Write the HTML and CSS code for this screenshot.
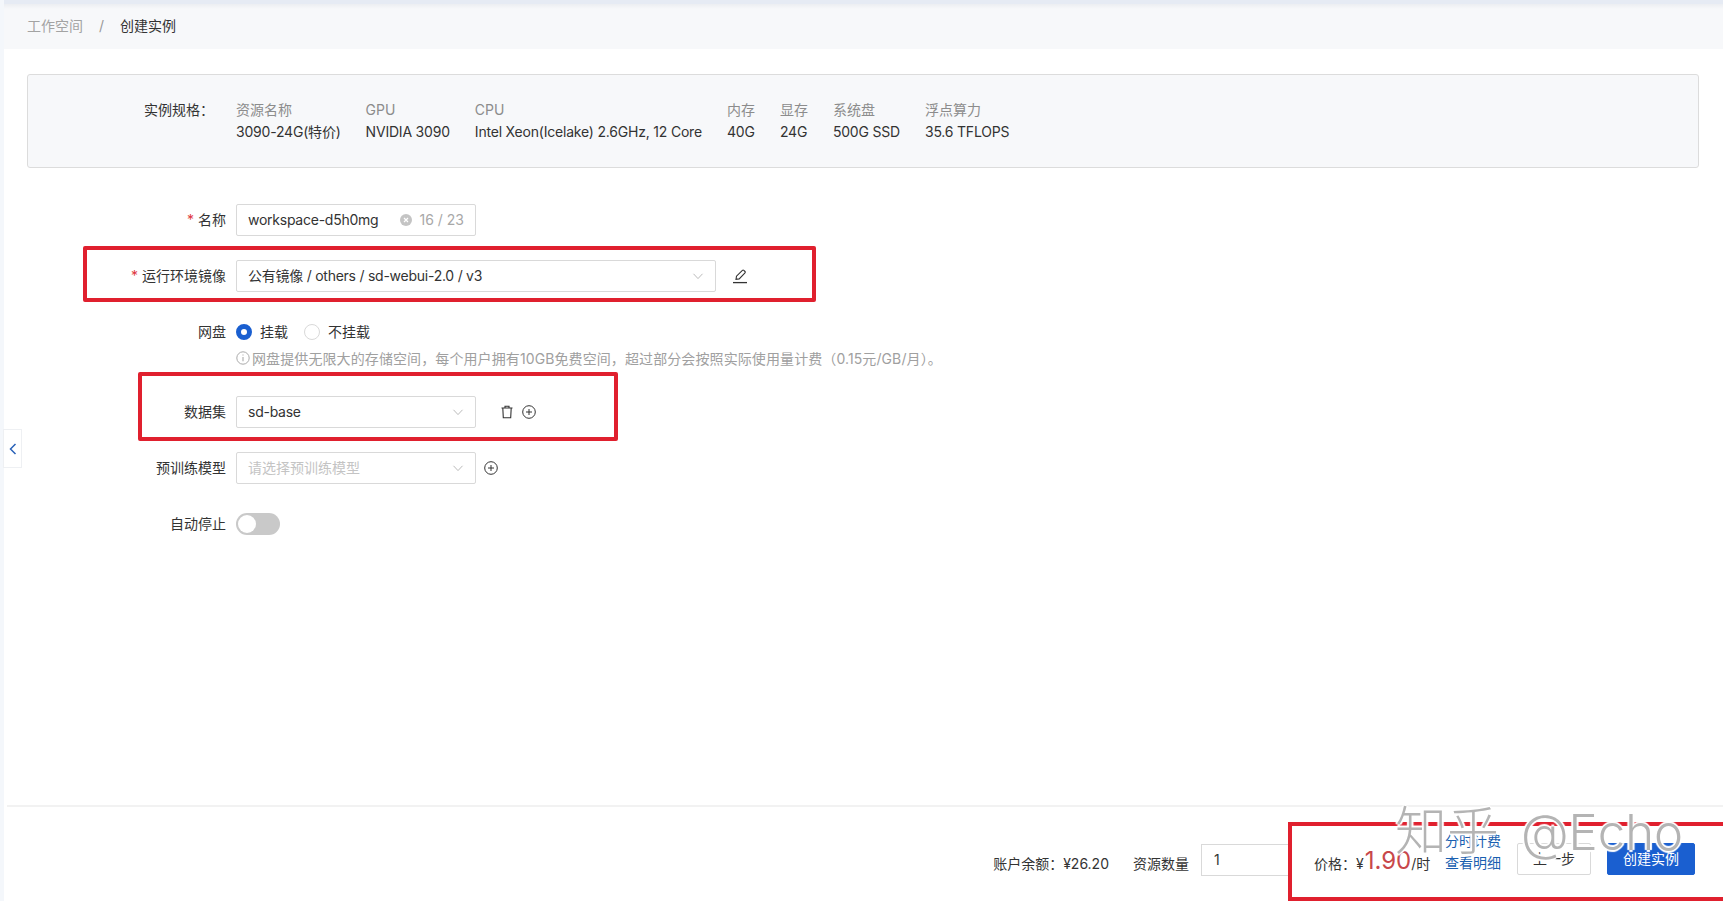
FILE: index.html
```html
<!DOCTYPE html>
<html>
<head>
    <meta charset="UTF-8">
    <title>创建实例</title>
    <link rel="stylesheet" href="styles.css">
</head>
<body>

    <div class="page">
        <div class="topbar"></div>

        <div class="breadcrumb">
            <span class="crumb-link">工作空间</span>
            <span class="crumb-sep">/</span>
            <span class="crumb-current">创建实例</span>
        </div>

        <div class="main">
            <div class="spec">
                <div class="spec-title">实例规格：</div>
                <div class="spec-col"><span class="spec-key">资源名称</span><span class="spec-val">3090-24G(特价)</span></div>
                <div class="spec-col"><span class="spec-key">GPU</span><span class="spec-val">NVIDIA 3090</span></div>
                <div class="spec-col"><span class="spec-key">CPU</span><span class="spec-val">Intel Xeon(Icelake) 2.6GHz, 12 Core</span></div>
                <div class="spec-col"><span class="spec-key">内存</span><span class="spec-val">40G</span></div>
                <div class="spec-col"><span class="spec-key">显存</span><span class="spec-val">24G</span></div>
                <div class="spec-col"><span class="spec-key">系统盘</span><span class="spec-val">500G SSD</span></div>
                <div class="spec-col"><span class="spec-key">浮点算力</span><span class="spec-val">35.6 TFLOPS</span></div>
            </div>

            <div class="form">
                <div class="row">
                    <label class="label"><span class="req">*</span> 名称</label>
                    <div class="field w240">
                        <span class="field-text">workspace-d5h0mg</span>
                        <svg class="clear" width="12" height="12" viewBox="0 0 12 12"><circle cx="6" cy="6" r="6" fill="#c4c4c4"/><path d="M4 4l4 4M8 4l-4 4" stroke="#fff" stroke-width="1.2"/></svg>
                        <span class="count">16 / 23</span>
                    </div>
                </div>

                <div class="row">
                    <div class="mark mark-image"></div>
                    <label class="label"><span class="req">*</span> 运行环境镜像</label>
                    <div class="field w480">
                        <span class="field-text">公有镜像 / others / sd-webui-2.0 / v3</span>
                        <svg class="arrow" width="12" height="12" viewBox="0 0 12 12"><path d="M1.5 3.8L6 8.6l4.5-4.8" fill="none" stroke="#bbb" stroke-width="1"/></svg>
                    </div>
                    <svg class="icon edit" width="16" height="16" viewBox="0 0 16 16"><path d="M4 11.4l.5-3.2L10.4 2.3a1 1 0 0 1 1.4 0l1.2 1.2a1 1 0 0 1 0 1.4L7.2 10.9z" fill="none" stroke="#333" stroke-width="1.1"/><path d="M1 14.6h14" stroke="#333" stroke-width="1.3"/></svg>
                </div>

                <div class="row row-tight">
                    <label class="label">网盘</label>
                    <span class="radio radio-on"></span>
                    <span class="radio-text">挂载</span>
                    <span class="radio"></span>
                    <span class="radio-text">不挂载</span>
                </div>
                <div class="hint">
                    <svg width="14" height="14" viewBox="0 0 14 14"><circle cx="7" cy="7" r="6.2" fill="none" stroke="#aaa"/><path d="M7 6v4.2M7 3.4v1.2" stroke="#aaa" stroke-width="1.1"/></svg>
                    <span>网盘提供无限大的存储空间，每个用户拥有10GB免费空间，超过部分会按照实际使用量计费（0.15元/GB/月）。</span>
                </div>

                <div class="row">
                    <div class="mark mark-data"></div>
                    <label class="label">数据集</label>
                    <div class="field w240">
                        <span class="field-text">sd-base</span>
                        <svg class="arrow" width="12" height="12" viewBox="0 0 12 12"><path d="M1.5 3.8L6 8.6l4.5-4.8" fill="none" stroke="#bbb" stroke-width="1"/></svg>
                    </div>
                    <svg class="icon trash" width="14" height="14" viewBox="0 0 14 14"><path d="M1.5 3h11M5 3V1.2h4V3M2.8 3l.5 9.8h7.4l.5-9.8" fill="none" stroke="#333" stroke-width="1.1"/></svg>
                    <svg class="icon plus-next" width="14" height="14" viewBox="0 0 14 14"><circle cx="7" cy="7" r="6.3" fill="none" stroke="#333"/><path d="M7 4v6M4 7h6" stroke="#333"/></svg>
                </div>

                <div class="row">
                    <label class="label">预训练模型</label>
                    <div class="field w240">
                        <span class="field-text placeholder">请选择预训练模型</span>
                        <svg class="arrow" width="12" height="12" viewBox="0 0 12 12"><path d="M1.5 3.8L6 8.6l4.5-4.8" fill="none" stroke="#bbb" stroke-width="1"/></svg>
                    </div>
                    <svg class="icon plus" width="14" height="14" viewBox="0 0 14 14"><circle cx="7" cy="7" r="6.3" fill="none" stroke="#333"/><path d="M7 4v6M4 7h6" stroke="#333"/></svg>
                </div>

                <div class="row">
                    <label class="label">自动停止</label>
                    <span class="switch"><span class="knob"></span></span>
                </div>
            </div>
        </div>

        <div class="footer">
            <span class="balance">账户余额：¥26.20</span>
            <span class="qty-label">资源数量</span>
            <div class="qty">1</div>
            <div class="checkout">
                <div class="price">价格：¥<span class="amount">1.90</span>/时</div>
                <div class="links">
                    <a>分时计费</a>
                    <a>查看明细</a>
                </div>
                <button class="btn">上一步</button>
                <button class="btn btn-primary">创建实例</button>
            </div>
        </div>
    </div>

    <div class="collapse">
        <svg width="8" height="12" viewBox="0 0 8 12"><path d="M6.5 1L1.5 6l5 5" fill="none" stroke="#2a62b8" stroke-width="1.5"/></svg>
    </div>
    <div class="watermark">知乎<span class="watermark-name">@Echo</span></div>

</body>
</html>
```

FILE: styles.css
```css
* {
    box-sizing: border-box;
}

body {
    margin: 0;
    font-family: Inter, "Noto Sans CJK SC", sans-serif;
    font-size: 14px;
    color: #333;
    background: #fff;
}

.page {
    height: 901px;
    display: flex;
    flex-direction: column;
    border-left: 4px solid #f4f7fb;
    overflow: hidden;
}

.topbar {
    height: 4px;
    margin-left: -4px;
    background: #e6ebf4;
}

.breadcrumb {
    height: 45px;
    padding: 0 0 3px 23px;
    display: flex;
    align-items: center;
    background: linear-gradient(#eceef2, #f7f8fa 5px);
}

.crumb-link {
    color: #a3a3a3;
}

.crumb-sep {
    margin: 0 16px;
    color: #999;
}

.main {
    flex: 1;
    padding: 25px 24px 0 23px;
}

/* instance spec */
.spec {
    height: 94px;
    padding-top: 24px;
    display: flex;
    gap: 25px;
    background: #f7f8fa;
    border: 1px solid #dcdcdc;
    border-radius: 3px;
}

.spec-title {
    width: 186px;
    margin-right: -3px;
    text-align: right;
    line-height: 22px;
}

.spec-col {
    display: flex;
    flex-direction: column;
    line-height: 22px;
}

.spec-key {
    color: #8c8c8c;
}

.spec-val {
    letter-spacing: -0.2px;
}

/* form */
.form {
    margin-top: 36px;
}

.row {
    height: 32px;
    margin-bottom: 24px;
    display: flex;
    align-items: center;
    position: relative;
}

.row-tight {
    margin-bottom: 0;
}

.label {
    width: 199px;
    margin-right: 10px;
    padding-bottom: 2px;
    text-align: right;
}

.req {
    color: #e0383e;
}

.field {
    height: 32px;
    padding: 0 11px;
    display: flex;
    align-items: center;
    border: 1px solid #d9d9d9;
    border-radius: 2px;
    background: #fff;
}

.w240 {
    width: 240px;
}

.w480 {
    width: 480px;
}

.field-text {
    flex: 1;
    padding-bottom: 2px;
    white-space: nowrap;
    letter-spacing: -0.25px;
}

.placeholder {
    color: #c4c4c4;
    letter-spacing: 0;
}

.clear {
    margin-right: 8px;
}

.count {
    padding-bottom: 2px;
    color: #a8a8a8;
}

.edit {
    margin-left: 16px;
}

.trash {
    margin-left: 24px;
}

.plus-next {
    margin-left: 8px;
}

.plus {
    margin-left: 8px;
}

.radio {
    width: 16px;
    height: 16px;
    border: 1px solid #d9d9d9;
    border-radius: 50%;
    background: #fff;
}

.radio-on {
    border: 5px solid #1a5fd0;
}

.radio-text {
    margin: 0 16px 0 8px;
    padding-bottom: 2px;
}

.hint {
    height: 22px;
    margin: 0 0 26px 209px;
    padding-bottom: 2px;
    display: flex;
    align-items: center;
    gap: 2px;
    color: #a0a0a0;
    white-space: nowrap;
    letter-spacing: 0.1px;
}

.switch {
    width: 44px;
    height: 22px;
    padding: 2px;
    border-radius: 11px;
    background: #c9c9c9;
}

.knob {
    display: block;
    width: 18px;
    height: 18px;
    border-radius: 50%;
    background: #fff;
}

/* red annotation frames */
.mark {
    position: absolute;
    border: 4px solid #e0202e;
    border-radius: 2px;
    pointer-events: none;
}

.mark-image {
    left: 56px;
    top: -14px;
    width: 733px;
    height: 56px;
}

.mark-data {
    left: 111px;
    top: -24px;
    width: 480px;
    height: 69px;
}

/* footer */
.footer {
    height: 96px;
    display: flex;
    justify-content: flex-end;
    align-items: flex-start;
    border-top: 2px solid #f2f2f2;
    margin-left: 3px;
}

.balance {
    margin: 46px 24px 0 0;
}

.qty-label {
    margin: 46px 12px 0 0;
}

.qty {
    width: 87px;
    height: 32px;
    margin-top: 37px;
    padding: 0 12px 2px;
    display: flex;
    align-items: center;
    border: 1px solid #d9d9d9;
    border-right: none;
}

.checkout {
    width: 435px;
    height: 79px;
    margin-top: 15px;
    padding: 0 28px 0 22px;
    display: flex;
    align-items: flex-start;
    border: 4px solid #e0202e;
    border-right: none;
    background: #fff;
}

.price {
    width: 131px;
    margin-top: 19px;
    line-height: 32px;
    white-space: nowrap;
}

.amount {
    margin-left: 1px;
    font-size: 24px;
    color: #c8474a;
}

.links {
    width: 72px;
    margin-top: 4px;
    display: flex;
    flex-direction: column;
    line-height: 22px;
    color: #1a5fb0;
}

.btn {
    width: 74px;
    height: 32px;
    margin-top: 17px;
    padding-bottom: 3px;
    border: 1px solid #d9d9d9;
    border-radius: 2px;
    background: #fff;
    color: #333;
    font: inherit;
}

.btn-primary {
    width: 88px;
    margin-left: 16px;
    border-color: #1a5fd0;
    background: #1a5fd0;
    color: #fff;
}

.collapse {
    position: absolute;
    left: 3px;
    top: 429px;
    width: 19px;
    height: 39px;
    display: flex;
    align-items: center;
    padding-left: 5px;
    background: #fff;
    border: 1px solid #eef0f3;
}

/* site watermark burned into the shot, white halo cuts what lies below */
.watermark {
    position: absolute;
    left: 1395px;
    top: 800px;
    font-size: 52px;
    font-weight: 300;
    line-height: 64px;
    white-space: nowrap;
    color: #b4b4b4;
    text-shadow: 2px 0 1px #fff, -2px 0 1px #fff, 0 2px 1px #fff, 0 -2px 1px #fff;
    pointer-events: none;
}

.watermark-name {
    margin-left: 22px;
    font-size: 49px;
}
```
